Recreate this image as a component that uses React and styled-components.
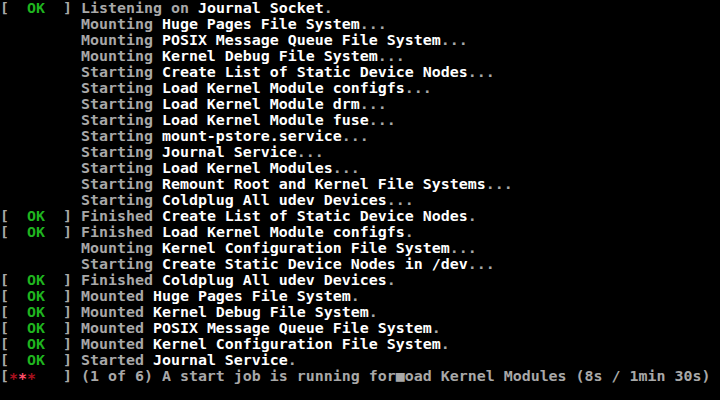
import React from 'react';
import styled, { createGlobalStyle } from 'styled-components';

const GlobalStyle = createGlobalStyle`
  html, body {
    margin: 0;
    padding: 0;
    background: #000;
  }
`;

const Screen = styled.div`
  width: 720px;
  height: 400px;
  background: #000;
  overflow: hidden;
  font-family: "DejaVu Sans Mono", "Liberation Mono", monospace;
  font-size: 14.95px;
  font-weight: bold;
  color: #a8a8a8;
`;

const Line = styled.div`
  height: 16px;
  line-height: 16px;
  white-space: pre;
`;

const Ok = styled.span`
  color: #1fb41f;
`;

const Star = styled.span`
  color: ${props => (props.$bright ? '#ff4f6a' : '#a8101e')};
`;

const Unit = styled.span`
  color: #ffffff;
`;

const Block = styled.span`
  color: #a8a8a8;
`;

const lines = [
  { ok: true, verb: 'Listening on', unit: 'Journal Socket', tail: '.' },
  { verb: 'Mounting', unit: 'Huge Pages File System', tail: '...' },
  { verb: 'Mounting', unit: 'POSIX Message Queue File System', tail: '...' },
  { verb: 'Mounting', unit: 'Kernel Debug File System', tail: '...' },
  { verb: 'Starting', unit: 'Create List of Static Device Nodes', tail: '...' },
  { verb: 'Starting', unit: 'Load Kernel Module configfs', tail: '...' },
  { verb: 'Starting', unit: 'Load Kernel Module drm', tail: '...' },
  { verb: 'Starting', unit: 'Load Kernel Module fuse', tail: '...' },
  { verb: 'Starting', unit: 'mount-pstore.service', tail: '...' },
  { verb: 'Starting', unit: 'Journal Service', tail: '...' },
  { verb: 'Starting', unit: 'Load Kernel Modules', tail: '...' },
  { verb: 'Starting', unit: 'Remount Root and Kernel File Systems', tail: '...' },
  { verb: 'Starting', unit: 'Coldplug All udev Devices', tail: '...' },
  { ok: true, verb: 'Finished', unit: 'Create List of Static Device Nodes', tail: '.' },
  { ok: true, verb: 'Finished', unit: 'Load Kernel Module configfs', tail: '.' },
  { verb: 'Mounting', unit: 'Kernel Configuration File System', tail: '...' },
  { verb: 'Starting', unit: 'Create Static Device Nodes in /dev', tail: '...' },
  { ok: true, verb: 'Finished', unit: 'Coldplug All udev Devices', tail: '.' },
  { ok: true, verb: 'Mounted', unit: 'Huge Pages File System', tail: '.' },
  { ok: true, verb: 'Mounted', unit: 'Kernel Debug File System', tail: '.' },
  { ok: true, verb: 'Mounted', unit: 'POSIX Message Queue File System', tail: '.' },
  { ok: true, verb: 'Mounted', unit: 'Kernel Configuration File System', tail: '.' },
  { ok: true, verb: 'Started', unit: 'Journal Service', tail: '.' },
];

function Prefix({ ok }) {
  if (!ok) return '         ';
  return (
    <>
      {'[  '}
      <Ok>OK</Ok>
      {'  ] '}
    </>
  );
}

export default function App() {
  return (
    <Screen>
      <GlobalStyle />
      {lines.map((l, i) => (
        <Line key={i}>
          <Prefix ok={l.ok} />
          {l.verb + ' '}
          <Unit>{l.unit}</Unit>
          {l.tail}
        </Line>
      ))}
      <Line>
        {'['}
        <Star>∗</Star>
        <Star $bright>∗</Star>
        <Star>∗</Star>
        {'   ] (1 of 6) A start job is running for'}
        <Block>■</Block>
        {'oad Kernel Modules (8s / 1min 30s)'}
      </Line>
      <Line />
    </Screen>
  );
}
